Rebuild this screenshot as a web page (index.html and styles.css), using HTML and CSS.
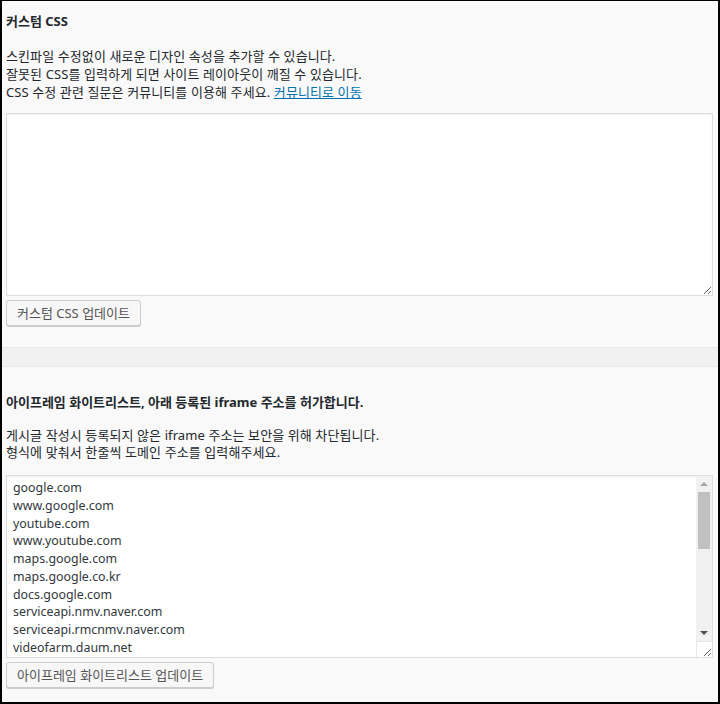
FILE: index.html
```html
<!DOCTYPE html>
<html lang="ko">
<head>
<meta charset="UTF-8" />
<meta name="viewport" content="width=device-width, initial-scale=1.0"/>
<title>커스텀 CSS</title>
<link rel="stylesheet" href="styles.css">
</head>
<body>
    <div class="panel">
        <!-- Custom CSS -->
        <section class="block">
            <h3 class="block-title">커스텀 CSS</h3>
            <p class="block-desc">
                스킨파일 수정없이 새로운 디자인 속성을 추가할 수 있습니다.<br>
                잘못된 CSS를 입력하게 되면 사이트 레이아웃이 깨질 수 있습니다.<br>
                CSS 수정 관련 질문은 커뮤니티를 이용해 주세요. <a href="#" class="link">커뮤니티로 이동</a>
            </p>
            <textarea class="code-box css-box"></textarea>
            <button class="update-button">커스텀 CSS 업데이트</button>
        </section>

        <div class="divider"></div>

        <!-- iframe whitelist -->
        <section class="block">
            <h3 class="block-title">아이프레임 화이트리스트, 아래 등록된 iframe 주소를 허가합니다.</h3>
            <p class="block-desc">
                게시글 작성시 등록되지 않은 iframe 주소는 보안을 위해 차단됩니다.<br>
                형식에 맞춰서 한줄씩 도메인 주소를 입력해주세요.
            </p>
            <div class="list-wrap">
<textarea class="code-box list-box">google.com
www.google.com
youtube.com
www.youtube.com
maps.google.com
maps.google.co.kr
docs.google.com
serviceapi.nmv.naver.com
serviceapi.rmcnmv.naver.com
videofarm.daum.net
player.vimeo.com
w.soundcloud.com
slideshare.net
www.slideshare.net
tv.kakao.com
tv.naver.com
www.dailymotion.com
player.twitch.tv
www.facebook.com
instagram.com
www.instagram.com
twitter.com
platform.twitter.com</textarea>
                <!-- scrollbar drawn over the textarea -->
                <div class="fake-scroll">
                    <div class="scroll-btn"><span class="tri tri-up"></span></div>
                    <div class="scroll-track"><div class="scroll-thumb"></div></div>
                    <div class="scroll-btn"><span class="tri tri-down"></span></div>
                </div>
                <div class="scroll-corner"></div>
            </div>
            <button class="update-button">아이프레임 화이트리스트 업데이트</button>
        </section>
    </div>
</body>
</html>
```

FILE: styles.css
```css
html, body {
    margin: 0;
    padding: 0;
    height: 100%;
}

body {
    font-family: "Noto Sans", "Noto Sans CJK KR", sans-serif;
    font-size: 13px;
    color: #23282d;
    background: #000;
    box-sizing: border-box;
    padding: 1px 2px 2px 2px;
}

.panel {
    background: #f9f9f9;
    height: 100%;
    overflow: hidden;
}

.block {
    padding: 11px 5px 0 4px;
}

.block-title {
    font-size: 13px;
    font-weight: bold;
    line-height: 18px;
    margin: 0 0 17px 0;
}

.block-desc {
    line-height: 18px;
    margin: 0 0 12px 0;
    letter-spacing: 0.1px;
}

.link {
    color: #0073aa;
    text-decoration: underline;
}

.code-box {
    display: block;
    box-sizing: border-box;
    width: 100%;
    margin: 0;
    background: #fff;
    border: 1px solid #ddd;
    box-shadow: inset 0 1px 2px rgba(0,0,0,0.07);
    font-family: "Noto Sans", "Noto Sans CJK KR", sans-serif;
    font-size: 13px;
    color: #32373c;
}

.css-box {
    height: 183px;
}

.list-wrap {
    position: relative;
}

.list-box {
    height: 183px;
    font-size: 12.4px;
    line-height: 17.75px;
    padding: 3px 22px 3px 6px;
    resize: vertical;
}

.fake-scroll {
    position: absolute;
    top: 1px;
    right: 1px;
    bottom: 17px;
    width: 16px;
    background: #f1f1f1;
    display: flex;
    flex-direction: column;
    pointer-events: none;
}

.scroll-btn {
    height: 16px;
    display: flex;
    align-items: center;
    justify-content: center;
}

.scroll-track {
    flex: 1;
    padding: 0 2px;
}

.scroll-thumb {
    height: 57px;
    background: #c1c1c1;
}

.tri {
    width: 0;
    height: 0;
    border-left: 4px solid transparent;
    border-right: 4px solid transparent;
}

.tri-up {
    border-bottom: 4px solid #a3a3a3;
}

.tri-down {
    border-top: 4px solid #505050;
}

.scroll-corner {
    position: absolute;
    right: 1px;
    bottom: 1px;
    width: 15px;
    height: 15px;
    border-left: 1px solid #e6e6e6;
    border-top: 1px solid #e6e6e6;
    pointer-events: none;
}

.update-button {
    display: block;
    margin-top: 4px;
    height: 26px;
    padding: 0 10px;
    background: #f7f7f7;
    border: 1px solid #ccc;
    border-radius: 3px;
    box-shadow: 0 1px 0 #ccc;
    color: #555;
    font-family: "Noto Sans", "Noto Sans CJK KR", sans-serif;
    font-size: 13px;
    line-height: 24px;
    cursor: pointer;
}

.divider {
    margin-top: 21px;
    height: 18px;
    background: #f1f1f1;
    border-top: 1px solid #e8e8e8;
    border-bottom: 1px solid #e8e8e8;
}

.divider + .block {
    padding-top: 26px;
}

.divider + .block .block-title {
    margin-bottom: 16px;
}

.divider + .block .block-desc {
    line-height: 17px;
    margin-bottom: 14px;
}
```
